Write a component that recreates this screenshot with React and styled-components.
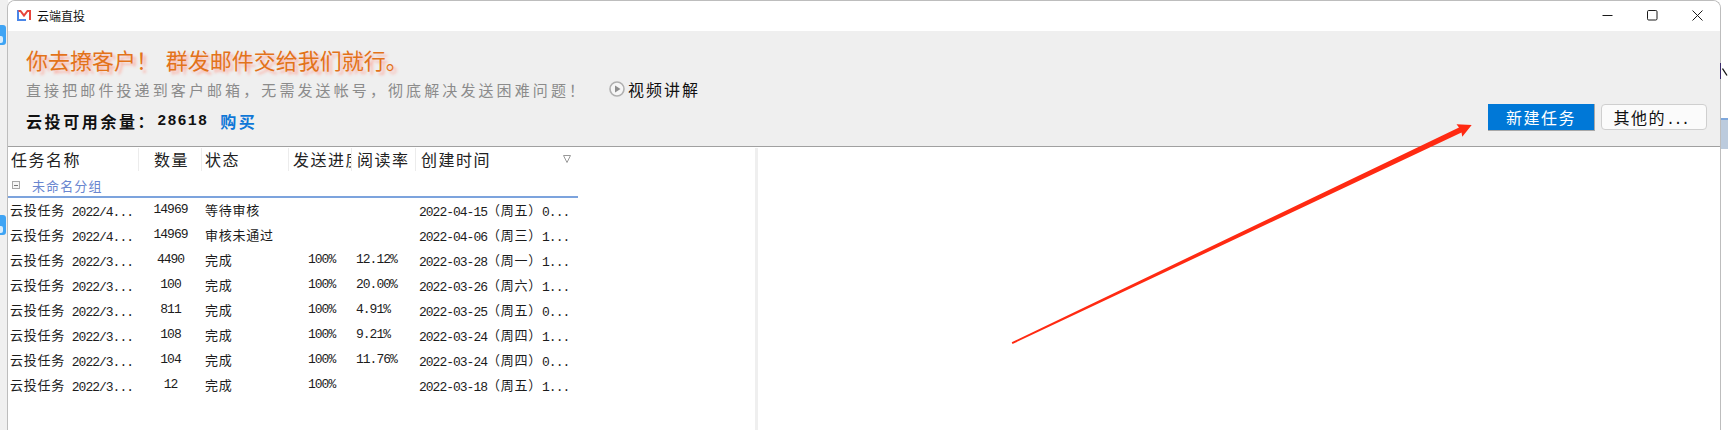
import React from "react";
import styled, { createGlobalStyle } from "styled-components";

const CJK = `"Noto Sans CJK SC", "Liberation Sans", sans-serif`;
const MONO = `"Liberation Mono", "Noto Sans CJK SC", monospace`;

const GlobalStyle = createGlobalStyle`
  html, body {
    margin: 0;
    padding: 0;
    background: #ffffff;
    overflow: hidden;
  }
`;

const Desktop = styled.div`
  position: relative;
  width: 1728px;
  height: 430px;
  background: #ffffff;
  overflow: hidden;
  font-family: ${CJK};
`;

const DesktopStrip = styled.div`
  position: absolute;
  left: 0;
  top: 0;
  width: 8px;
  height: 430px;
  background: #f0f0f0;
`;

const DesktopTab = styled.div`
  position: absolute;
  left: 0;
  top: ${(p) => p.$top}px;
  width: 6px;
  height: 20px;
  background: #3fa4f4;
  border-radius: 0 3px 3px 0;

  &::after {
    content: "";
    position: absolute;
    left: 0;
    top: 11px;
    width: 3px;
    height: 7px;
    background: #d8ecfc;
    border-radius: 0 2px 2px 0;
  }
`;

const DesktopEdge = styled.div`
  position: absolute;
  left: 1721px;
  top: 118px;
  width: 7px;
  height: 31px;
  background: #bccbdd;
  border-top: 2px solid #7fa8dc;
  box-sizing: border-box;
`;

const DesktopMark = styled.div`
  position: absolute;
  left: 1720px;
  top: 63px;
  width: 1px;
  height: 16px;
  background: #3a2a6a;
`;

const DesktopGlyph = styled.svg`
  position: absolute;
  left: 1722px;
  top: 68px;
`;

const Window = styled.div`
  position: absolute;
  left: 7px;
  top: 0;
  width: 1714px;
  height: 430px;
  display: flex;
  flex-direction: column;
  box-sizing: border-box;
  border: 1px solid #bdbdbd;
  border-bottom: none;
  border-radius: 8px 8px 0 0;
  background: #ffffff;
  overflow: hidden;
`;

const TitleBar = styled.div`
  flex: 0 0 30px;
  box-sizing: border-box;
  display: flex;
  align-items: center;
  padding: 0 17px 1px 9px;
  background: #ffffff;
`;

const AppTitle = styled.span`
  margin-left: 6px;
  font-size: 12px;
  color: #111;
`;

const WindowControls = styled.div`
  margin-left: auto;
  display: flex;
  align-items: center;
  gap: 34px;
  color: #1a1a1a;
`;

const Header = styled.div`
  flex: 0 0 116px;
  display: flex;
  justify-content: space-between;
  box-sizing: border-box;
  background: #efefef;
  border-bottom: 1px solid #a0a0a0;
`;

const Promo = styled.div`
  display: flex;
  flex-direction: column;
  padding: 14px 0 0 18px;
`;

const Headline = styled.div`
  font-size: 22px;
  line-height: 29px;
  word-spacing: -1px;
  color: #e3731a;
  text-shadow: 3px 3px 3px #fbb0a4;
  white-space: pre;
`;

const SubRow = styled.div`
  display: flex;
  align-items: center;
  height: 30px;
`;

const SubText = styled.span`
  font-size: 15px;
  letter-spacing: 3.1px;
  color: #8b8b8b;
  white-space: pre;
`;

const VideoLink = styled.span`
  display: flex;
  align-items: center;
  gap: 3px;
  margin-left: 22px;
  font-size: 16px;
  letter-spacing: 2px;
  color: #111;
`;

const QuotaRow = styled.div`
  display: flex;
  align-items: center;
  margin-top: 2px;
  height: 30px;
  font-size: 16px;
  font-weight: 700;
  letter-spacing: 2.6px;
  color: #111;
`;

const QuotaValue = styled.span`
  font-family: ${MONO};
  font-size: 15px;
  letter-spacing: 1.2px;
  margin-left: 1px;
`;

const BuyLink = styled.span`
  margin-left: 12px;
  letter-spacing: 2.5px;
  color: #0f78d7;
`;

const HeaderActions = styled.div`
  display: flex;
  gap: 6px;
  align-items: flex-start;
  padding: 73px 13px 0 0;
`;

const PrimaryButton = styled.button`
  width: 107px;
  height: 27px;
  padding: 0;
  border: none;
  border-right: 1px solid #a8a8a8;
  border-bottom: 1px solid #a8a8a8;
  background: #0078d7;
  color: #ffffff;
  font-family: ${CJK};
  font-size: 16px;
  letter-spacing: 1.5px;
`;

const SecondaryButton = styled.button`
  width: 106px;
  height: 26px;
  padding: 0 6px 0 0;
  border: 1px solid #cfcfcf;
  border-radius: 4px;
  background: #fbfbfb;
  color: #111;
  font-family: ${CJK};
  font-size: 16px;
  letter-spacing: 1.5px;
`;

const ButtonDots = styled.span`
  font-family: ${MONO};
  font-size: 15px;
  letter-spacing: -1.5px;
`;

const Body = styled.div`
  flex: 1;
  display: flex;
  min-height: 0;
`;

const TaskPane = styled.div`
  flex: 0 0 747px;
`;

const Splitter = styled.div`
  flex: 0 0 3px;
  margin-top: 1px;
  background: #efefef;
`;

const COLUMNS = "131px 63px 87px 63px 64px 162px";

const TableHead = styled.div`
  display: grid;
  grid-template-columns: ${COLUMNS};
  width: 570px;
  height: 26px;
  padding-top: 1px;
  box-sizing: border-box;
  align-items: start;
`;

const HeadCell = styled.div`
  position: relative;
  height: 23px;
  line-height: 22px;
  padding-left: ${(p) => p.$pad}px;
  box-sizing: border-box;
  border-right: ${(p) => (p.$last ? "none" : "1px solid #ececec")};
  font-size: 16px;
  letter-spacing: 1.5px;
  color: #222;
  white-space: nowrap;
  overflow: hidden;
`;

const SortMark = styled.svg`
  position: absolute;
  right: 7px;
  top: 7px;
`;

const GroupRow = styled.div`
  display: flex;
  align-items: center;
  width: 570px;
  height: 25px;
  box-sizing: border-box;
  padding: 1px 0 0 4px;
  border-bottom: 2px solid #7ca3dd;
  font-size: 13px;
  letter-spacing: 1.1px;
  color: #6a86cf;
`;

const Expander = styled.span`
  width: 8px;
  height: 8px;
  margin-right: 12px;
  box-sizing: border-box;
  border: 1px solid #a8a8a8;
  background: #f6f6f6;
  display: flex;
  align-items: center;
  justify-content: center;

  &::after {
    content: "";
    width: 4px;
    height: 1px;
    background: #777;
  }
`;

const Row = styled.div`
  display: grid;
  grid-template-columns: ${COLUMNS};
  width: 570px;
  height: 25px;
  box-sizing: border-box;
  padding-bottom: 1px;
  align-items: center;
  font-family: ${MONO};
  font-size: 13px;
  line-height: 18px;
  letter-spacing: -1px;
  color: #1c1c1c;
  white-space: nowrap;
`;

const Han = styled.span`
  font-family: ${CJK};
  letter-spacing: 0.75px;
  vertical-align: 1px;
`;

const Cell = styled.div`
  height: 18px;
  padding-left: ${(p) => p.$pad ?? 0}px;
  text-align: ${(p) => p.$align ?? "left"};
`;

const DetailPane = styled.div`
  flex: 1;
  background: #ffffff;
`;

const ArrowLayer = styled.svg`
  position: absolute;
  left: 0;
  top: 0;
  pointer-events: none;
`;

const rows = [
  ["云投任务 2022/4...", "14969", "等待审核", "", "", "2022-04-15（周五）0..."],
  ["云投任务 2022/4...", "14969", "审核未通过", "", "", "2022-04-06（周三）1..."],
  ["云投任务 2022/3...", "4490", "完成", "100%", "12.12%", "2022-03-28（周一）1..."],
  ["云投任务 2022/3...", "100", "完成", "100%", "20.00%", "2022-03-26（周六）1..."],
  ["云投任务 2022/3...", "811", "完成", "100%", "4.91%", "2022-03-25（周五）0..."],
  ["云投任务 2022/3...", "108", "完成", "100%", "9.21%", "2022-03-24（周四）1..."],
  ["云投任务 2022/3...", "104", "完成", "100%", "11.76%", "2022-03-24（周四）0..."],
  ["云投任务 2022/3...", "12", "完成", "100%", "", "2022-03-18（周五）1..."],
];

// the grid text is half-width latin next to full-width han, so split the runs
const mixed = (text) =>
  text.split(/([\u4e00-\u9fff（）]+)/).map((part, i) =>
    i % 2 ? <Han key={i}>{part}</Han> : part
  );

const AppLogo = () => (
  <svg width="14" height="11" viewBox="0 0 14 11">
    <path d="M1 0V10H9" fill="none" stroke="#4a86e8" strokeWidth="2" />
    <path d="M1.5 1H3.5L7 5.5L10.5 1H13V10" fill="none" stroke="#e8453c" strokeWidth="2" />
  </svg>
);

const PlayIcon = () => (
  <svg width="16" height="16" viewBox="0 0 16 16">
    <circle cx="8" cy="8" r="7" fill="#f6f6f6" stroke="#b0b0b0" strokeWidth="1.6" />
    <path d="M6 4.5L11.5 8L6 11.5z" fill="#8f8f8f" />
  </svg>
);

export default function App() {
  return (
    <Desktop>
      <GlobalStyle />
      <DesktopStrip />
      <DesktopTab $top={25} />
      <DesktopTab $top={215} />
      <Window>
        <TitleBar>
          <AppLogo />
          <AppTitle>云端直投</AppTitle>
          <WindowControls>
            <svg width="11" height="11" viewBox="0 0 11 11">
              <path d="M0.5 5.5h10" stroke="currentColor" strokeWidth="1" />
            </svg>
            <svg width="11" height="11" viewBox="0 0 11 11">
              <rect x="0.5" y="0.5" width="9.5" height="9.5" rx="1.2" fill="none" stroke="currentColor" />
            </svg>
            <svg width="11" height="11" viewBox="0 0 11 11">
              <path d="M0.5 0.5l10 10M10.5 0.5l-10 10" stroke="currentColor" strokeWidth="1" />
            </svg>
          </WindowControls>
        </TitleBar>
        <Header>
          <Promo>
            <Headline>你去撩客户！  群发邮件交给我们就行。</Headline>
            <SubRow>
              <SubText>直接把邮件投递到客户邮箱，无需发送帐号，彻底解决发送困难问题！</SubText>
              <VideoLink>
                <PlayIcon />
                视频讲解
              </VideoLink>
            </SubRow>
            <QuotaRow>
              云投可用余量：
              <QuotaValue>28618</QuotaValue>
              <BuyLink>购买</BuyLink>
            </QuotaRow>
          </Promo>
          <HeaderActions>
            <PrimaryButton>新建任务</PrimaryButton>
            <SecondaryButton>
              其他的<ButtonDots>...</ButtonDots>
            </SecondaryButton>
          </HeaderActions>
        </Header>
        <Body>
          <TaskPane>
            <TableHead>
              <HeadCell $pad={3}>任务名称</HeadCell>
              <HeadCell $pad={15}>数量</HeadCell>
              <HeadCell $pad={3}>状态</HeadCell>
              <HeadCell $pad={4}>发送进度</HeadCell>
              <HeadCell $pad={5}>阅读率</HeadCell>
              <HeadCell $pad={5} $last>
                创建时间
                <SortMark width="8" height="8" viewBox="0 0 8 8">
                  <path d="M0.5 0.5h7L4 7.5z" fill="none" stroke="#999" />
                </SortMark>
              </HeadCell>
            </TableHead>
            <GroupRow>
              <Expander />
              未命名分组
            </GroupRow>
            {rows.map((row, i) => (
              <Row key={i}>
                <Cell $pad={2}>{mixed(row[0])}</Cell>
                <Cell $align="center">{row[1]}</Cell>
                <Cell $pad={3}>{mixed(row[2])}</Cell>
                <Cell $pad={19}>{row[3]}</Cell>
                <Cell $pad={4}>{row[4]}</Cell>
                <Cell $pad={3}>{mixed(row[5])}</Cell>
              </Row>
            ))}
          </TaskPane>
          <Splitter />
          <DetailPane />
        </Body>
      </Window>
      <DesktopEdge />
      <DesktopMark />
      <DesktopGlyph width="6" height="8" viewBox="0 0 6 8">
        <path d="M0.5 0.5L5 7.5" stroke="#111" strokeWidth="1.3" />
      </DesktopGlyph>
      <ArrowLayer width="1728" height="430" viewBox="0 0 1728 430">
        <path d="M1011.7 342.2L1459 127.5L1456.5 124.3L1471.7 125L1462.3 136.7L1461.5 132.5L1012.5 344z" fill="#ff2a12" />
      </ArrowLayer>
    </Desktop>
  );
}
